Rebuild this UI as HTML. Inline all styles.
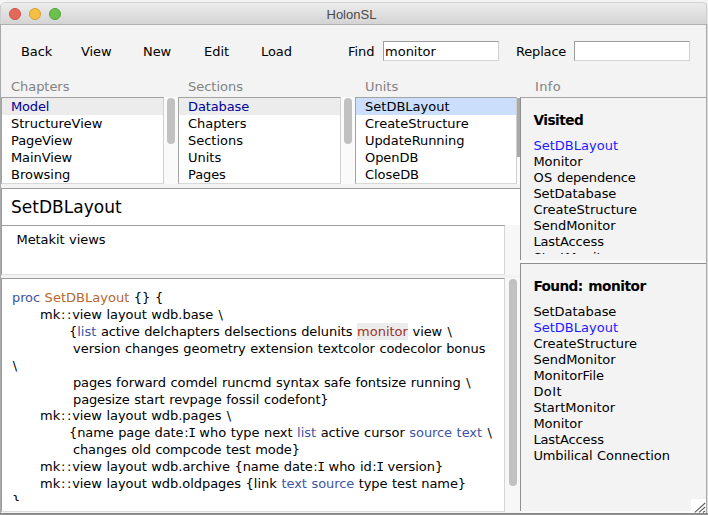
<!DOCTYPE html>
<html><head><meta charset="utf-8"><title>HolonSL</title><style>
html,body{margin:0;padding:0;}
body{width:708px;height:515px;overflow:hidden;background:#fff;position:relative;font-family:"DejaVu Sans", "Liberation Sans", sans-serif;font-size:13px;color:#000;}
div{position:absolute;box-sizing:border-box;white-space:pre;}
.t{line-height:17px;height:17px;word-spacing:0.44px;}
.lb{background:#fff;border:1px solid #a3a3a3;border-right-color:#d0d0d0;border-bottom-color:#d8d8d8;overflow:hidden;}
.lb .t{left:0;width:100%;padding-left:9px;}
.lab{color:#828282;}
.nv{color:#00009a;}
.sb{background:#c1c1c1;border-radius:4px;}
.ent{background:#fff;border:1px solid #9d9d9d;border-right-color:#cfcfcf;border-bottom-color:#d6d6d6;}
.code .t{left:0;}
.b{color:#3d55a5;}
.o{color:#b5682e;}
.m{color:#9a3322;background:#ececec;padding:1px 0;}
.il{line-height:16px;height:16px;left:12.4px;word-spacing:0.44px;}
.lk{color:#1c1cff;}
</style></head><body>
<div style="left:0;top:0;width:708px;height:30px;background:#f4f4f4;"></div>
<div style="left:0;top:2px;width:708px;height:513px;background:linear-gradient(90deg,#a9a9a9 0,#a9a9a9 1px,#ccc 1px,#ccc 705px,#a8a8a8 706px,#a8a8a8 707px,#dcdcdc 707px);border-radius:6px 6px 0 0;"></div>
<div style="left:0;top:2px;width:708px;height:22px;background:linear-gradient(90deg,#cfcfcf 0,#cfcfcf 1px,#ccc 1px,#ccc 705px,#d0d0d0 706px,#d0d0d0 707px,#e6e6e6 707px);border-radius:6px 6px 0 0;"></div>
<div style="left:0;top:513px;width:708px;height:2px;background:linear-gradient(#7e7e7e,#9a9a9a);"></div>
<div id="win" style="left:1px;top:2px;width:705px;height:511px;background:#f3f3f3;border-radius:5px 5px 0 0;overflow:hidden;">
<div style="left:0;top:0;width:705px;height:23px;background:linear-gradient(#ececec,#d4d4d4);border-top:1px solid #d2d2d2;border-bottom:1px solid #b1b1b1;"></div>
<div style="left:8px;top:6px;width:12px;height:12px;border-radius:6px;background:#e5695b;border:0.5px solid #cc5044;"></div>
<div style="left:28px;top:6px;width:12px;height:12px;border-radius:6px;background:#f3c044;border:0.5px solid #d5a02e;"></div>
<div style="left:48px;top:6px;width:12px;height:12px;border-radius:6px;background:#6bc14b;border:0.5px solid #53a338;"></div>
<div class="t" style="left:325.5px;top:3.5px;color:#4a4a4a;font-family:'Liberation Sans',sans-serif;">HolonSL</div>
<div class="t" style="left:20px;top:41px;"><span style="letter-spacing:-0.094px">Back</span></div>
<div class="t" style="left:80px;top:41px;"><span style="letter-spacing:-0.075px">View</span></div>
<div class="t" style="left:142px;top:41px;"><span style="letter-spacing:-0.083px">New</span></div>
<div class="t" style="left:203px;top:41px;"><span style="letter-spacing:-0.041px">Edit</span></div>
<div class="t" style="left:260px;top:41px;"><span style="letter-spacing:-0.095px">Load</span></div>
<div class="t" style="left:347px;top:41px;"><span style="letter-spacing:-0.054px">Find</span></div>
<div class="t" style="left:515px;top:41px;"><span style="letter-spacing:-0.176px">Replace</span></div>
<div class="ent" style="left:382px;top:39px;width:116px;height:20px;"><div class="t" style="left:1px;top:1px;"><span style="letter-spacing:0.004px">monitor</span></div></div>
<div class="ent" style="left:573px;top:39px;width:116px;height:20px;"></div>
<div class="t lab" style="left:10px;top:76px;"><span style="letter-spacing:-0.044px">Chapters</span></div>
<div class="t lab" style="left:187px;top:76px;"><span style="letter-spacing:-0.011px">Sections</span></div>
<div class="t lab" style="left:364px;top:76px;"><span style="letter-spacing:-0.006px">Units</span></div>
<div class="t lab" style="left:533.8px;top:76px;"><span style="letter-spacing:0.389px;margin-left:0.194px;margin-right:-0.194px">Info</span></div>
<div class="lb" style="left:0px;top:95px;width:163px;height:87px;">
<div class="t nv" style="top:0px;background:#ececec;"><span style="letter-spacing:-0.155px">Model</span></div>
<div class="t" style="top:17px;"><span style="letter-spacing:0.011px">StructureView</span></div>
<div class="t" style="top:34px;"><span style="letter-spacing:-0.108px">PageView</span></div>
<div class="t" style="top:51px;"><span style="letter-spacing:-0.097px">MainView</span></div>
<div class="t" style="top:68px;"><span style="letter-spacing:-0.009px">Browsing</span></div>
</div>
<div style="left:163px;top:95px;width:14px;height:87px;background:#fafafa;"></div>
<div class="sb" style="left:166px;top:96px;width:8px;height:46px;"></div>
<div class="lb" style="left:177px;top:95px;width:163px;height:87px;">
<div class="t nv" style="top:0px;background:#ececec;"><span style="letter-spacing:-0.106px">Database</span></div>
<div class="t" style="top:17px;"><span style="letter-spacing:-0.044px">Chapters</span></div>
<div class="t" style="top:34px;"><span style="letter-spacing:-0.011px">Sections</span></div>
<div class="t" style="top:51px;"><span style="letter-spacing:-0.006px">Units</span></div>
<div class="t" style="top:68px;"><span style="letter-spacing:-0.113px">Pages</span></div>
</div>
<div style="left:340px;top:95px;width:14px;height:87px;background:#fafafa;"></div>
<div class="sb" style="left:343px;top:96px;width:8px;height:46px;"></div>
<div class="lb" style="left:354px;top:95px;width:162px;height:87px;">
<div class="t " style="top:0px;background:#cbdffd;"><span style="letter-spacing:0.017px">SetDBLayout</span></div>
<div class="t" style="top:17px;"><span style="letter-spacing:0.000px">CreateStructure</span></div>
<div class="t" style="top:34px;"><span style="letter-spacing:-0.072px">UpdateRunning</span></div>
<div class="t" style="top:51px;"><span style="letter-spacing:-0.070px">OpenDB</span></div>
<div class="t" style="top:68px;"><span style="letter-spacing:-0.052px">CloseDB</span></div>
</div>
<div style="left:516px;top:95px;width:3px;height:87px;background:#fafafa;"></div>
<div style="left:516px;top:96px;width:3px;height:59px;background:#a9a9a9;"></div>
<div style="left:0px;top:186px;width:520px;height:38px;background:#fff;border-top:1px solid #9c9c9c;border-left:1px solid #9c9c9c;"><div style="left:9px;top:8px;font-size:17px;line-height:21px;"><span style="letter-spacing:0.023px">SetDBLayout</span></div></div>
<div style="left:1px;top:223px;width:519px;height:50px;background:#f7f7f7;"></div>
<div style="left:0px;top:223px;width:504px;height:50px;background:#fff;border:1px solid #9c9c9c;border-right-color:#d5d5d5;border-bottom-color:#dcdcdc;"><div class="t" style="left:14.5px;top:5px;"><span style="letter-spacing:-0.072px">Metakit</span> <span style="letter-spacing:-0.058px">views</span></div></div>
<div style="left:1px;top:276px;width:519px;height:234px;background:#f7f7f7;"></div>
<div class="code" style="left:0px;top:276px;width:504px;height:234px;background:#fff;border:1px solid #9c9c9c;border-right-color:#d5d5d5;border-bottom-color:#dcdcdc;overflow:hidden;"><div style="left:0;top:0;width:503px;height:222.4px;overflow:hidden;">
<div class="t" style="left:10px;top:10.00px;"><span class="b" style="letter-spacing:-0.097px">proc</span> <span class="o" style="letter-spacing:0.017px">SetDBLayout</span> <span style="letter-spacing:-0.019px">{}</span> <span style="letter-spacing:-0.019px">{</span></div>
<div class="t" style="left:38px;top:26.92px;"><span style="letter-spacing:0.073px">mk</span><span style="letter-spacing:1.523px;margin-left:0.762px;margin-right:-0.762px">::</span><span style="letter-spacing:-0.073px">view</span> <span style="letter-spacing:-0.042px">layout</span> <span style="letter-spacing:-0.033px">wdb.base</span> <span style="letter-spacing:1.523px;margin-left:0.762px;margin-right:-0.762px">\</span></div>
<div class="t" style="left:67px;top:43.84px;"><span style="letter-spacing:-0.019px">{</span><span class="b" style="letter-spacing:-0.016px">list</span> <span style="letter-spacing:-0.134px">active</span> <span style="letter-spacing:-0.107px">delchapters</span> <span style="letter-spacing:-0.107px">delsections</span> <span style="letter-spacing:-0.062px">delunits</span> <span class="m" style="letter-spacing:0.004px">monitor</span> <span style="letter-spacing:-0.073px">view</span> <span style="letter-spacing:1.523px;margin-left:0.762px;margin-right:-0.762px">\</span></div>
<div class="t" style="left:71px;top:60.76px;"><span style="letter-spacing:-0.024px">version</span> <span style="letter-spacing:-0.138px">changes</span> <span style="letter-spacing:-0.064px">geometry</span> <span style="letter-spacing:-0.068px">extension</span> <span style="letter-spacing:-0.061px">textcolor</span> <span style="letter-spacing:-0.132px">codecolor</span> <span style="letter-spacing:-0.048px">bonus</span></div>
<div class="t" style="left:10px;top:77.68px;"><span style="letter-spacing:1.523px;margin-left:0.762px;margin-right:-0.762px">\</span></div>
<div class="t" style="left:71px;top:94.60px;"><span style="letter-spacing:-0.143px">pages</span> <span style="letter-spacing:0.005px">forward</span> <span style="letter-spacing:-0.151px">comdel</span> <span style="letter-spacing:-0.061px">runcmd</span> <span style="letter-spacing:-0.024px">syntax</span> <span style="letter-spacing:-0.105px">safe</span> <span style="letter-spacing:-0.044px">fontsize</span> <span style="letter-spacing:-0.006px">running</span> <span style="letter-spacing:1.523px;margin-left:0.762px;margin-right:-0.762px">\</span></div>
<div class="t" style="left:71px;top:111.52px;"><span style="letter-spacing:-0.126px">pagesize</span> <span style="letter-spacing:0.019px">start</span> <span style="letter-spacing:-0.110px">revpage</span> <span style="letter-spacing:-0.026px">fossil</span> <span style="letter-spacing:-0.102px">codefont}</span></div>
<div class="t" style="left:38px;top:128.44px;"><span style="letter-spacing:0.073px">mk</span><span style="letter-spacing:1.523px;margin-left:0.762px;margin-right:-0.762px">::</span><span style="letter-spacing:-0.073px">view</span> <span style="letter-spacing:-0.042px">layout</span> <span style="letter-spacing:-0.047px">wdb.pages</span> <span style="letter-spacing:1.523px;margin-left:0.762px;margin-right:-0.762px">\</span></div>
<div class="t" style="left:67px;top:145.36px;"><span style="letter-spacing:-0.093px">{name</span> <span style="letter-spacing:-0.179px">page</span> <span style="letter-spacing:-0.135px">date</span><span style="letter-spacing:1.523px;margin-left:0.762px;margin-right:-0.762px">:</span><span style="letter-spacing:-2.354px;font-family:'DejaVu Sans Mono',monospace;margin-left:-1.177px;margin-right:1.177px">I</span> <span style="letter-spacing:-0.023px">who</span> <span style="letter-spacing:-0.095px">type</span> <span style="letter-spacing:-0.060px">next</span> <span class="b" style="letter-spacing:-0.016px">list</span> <span style="letter-spacing:-0.134px">active</span> <span style="letter-spacing:-0.007px">cursor</span> <span class="b" style="letter-spacing:-0.084px">source</span> <span class="b" style="letter-spacing:-0.051px">text</span> <span style="letter-spacing:1.523px;margin-left:0.762px;margin-right:-0.762px">\</span></div>
<div class="t" style="left:71px;top:162.28px;"><span style="letter-spacing:-0.138px">changes</span> <span style="letter-spacing:-0.087px">old</span> <span style="letter-spacing:-0.182px">compcode</span> <span style="letter-spacing:-0.051px">test</span> <span style="letter-spacing:-0.102px">mode}</span></div>
<div class="t" style="left:38px;top:179.20px;"><span style="letter-spacing:0.073px">mk</span><span style="letter-spacing:1.523px;margin-left:0.762px;margin-right:-0.762px">::</span><span style="letter-spacing:-0.073px">view</span> <span style="letter-spacing:-0.042px">layout</span> <span style="letter-spacing:-0.031px">wdb.archive</span> <span style="letter-spacing:-0.093px">{name</span> <span style="letter-spacing:-0.135px">date</span><span style="letter-spacing:1.523px;margin-left:0.762px;margin-right:-0.762px">:</span><span style="letter-spacing:-2.354px;font-family:'DejaVu Sans Mono',monospace;margin-left:-1.177px;margin-right:1.177px">I</span> <span style="letter-spacing:-0.023px">who</span> <span style="letter-spacing:-0.098px">id</span><span style="letter-spacing:1.523px;margin-left:0.762px;margin-right:-0.762px">:</span><span style="letter-spacing:-2.354px;font-family:'DejaVu Sans Mono',monospace;margin-left:-1.177px;margin-right:1.177px">I</span> <span style="letter-spacing:-0.024px">version}</span></div>
<div class="t" style="left:38px;top:196.12px;"><span style="letter-spacing:0.073px">mk</span><span style="letter-spacing:1.523px;margin-left:0.762px;margin-right:-0.762px">::</span><span style="letter-spacing:-0.073px">view</span> <span style="letter-spacing:-0.042px">layout</span> <span style="letter-spacing:-0.057px">wdb.oldpages</span> <span style="letter-spacing:0.009px">{link</span> <span class="b" style="letter-spacing:-0.051px">text</span> <span class="b" style="letter-spacing:-0.084px">source</span> <span style="letter-spacing:-0.095px">type</span> <span style="letter-spacing:-0.051px">test</span> <span style="letter-spacing:-0.093px">name}</span></div>
<div class="t" style="left:10px;top:213.04px;"><span style="letter-spacing:-0.019px">}</span></div>
</div></div>
<div class="sb" style="left:508px;top:277px;width:8px;height:207px;"></div>
<div style="left:519px;top:95px;width:186px;height:164px;background:#f3f3f3;border-left:1px solid #8e8e8e;border-top:1px solid #a5a5a5;overflow:hidden;">
<div class="il" style="top:14.4px;font-weight:bold;font-size:13.7px;"><span style="letter-spacing:-0.518px">Visited</span></div>
<div class="il lk" style="top:39.60px;"><span style="letter-spacing:0.017px">SetDBLayout</span></div>
<div class="il" style="top:55.63px;"><span style="letter-spacing:-0.031px">Monitor</span></div>
<div class="il" style="top:71.66px;"><span style="letter-spacing:0.317px">OS</span> <span style="letter-spacing:-0.187px">dependence</span></div>
<div class="il" style="top:87.69px;"><span style="letter-spacing:-0.040px">SetDatabase</span></div>
<div class="il" style="top:103.72px;"><span style="letter-spacing:0.000px">CreateStructure</span></div>
<div class="il" style="top:119.75px;"><span style="letter-spacing:0.000px">SendMonitor</span></div>
<div class="il" style="top:135.78px;"><span style="letter-spacing:-0.115px">LastAccess</span></div>
<div class="il" style="top:151.81px;"><span style="letter-spacing:0.043px">StartMonitor</span></div>
<div style="left:0;top:156.3px;width:186px;height:8px;background:#f3f3f3;"></div>
</div>
<div style="left:519px;top:258px;width:186px;height:3px;background:#fafafa;"></div>
<div style="left:519px;top:261px;width:186px;height:250px;background:#f3f3f3;border-left:1px solid #8e8e8e;border-top:1px solid #8e8e8e;overflow:hidden;">
<div class="il" style="top:14.2px;font-weight:bold;font-size:13.7px;"><span style="letter-spacing:-0.621px">Found</span><span style="letter-spacing:-0.248px;margin-left:-0.124px;margin-right:0.124px">:</span> <span style="letter-spacing:-0.451px">monitor</span></div>
<div class="il" style="top:39.60px;"><span style="letter-spacing:-0.040px">SetDatabase</span></div>
<div class="il lk" style="top:55.63px;"><span style="letter-spacing:0.017px">SetDBLayout</span></div>
<div class="il" style="top:71.66px;"><span style="letter-spacing:0.000px">CreateStructure</span></div>
<div class="il" style="top:87.69px;"><span style="letter-spacing:0.000px">SendMonitor</span></div>
<div class="il" style="top:103.72px;"><span style="letter-spacing:-0.051px">MonitorFile</span></div>
<div class="il" style="top:119.75px;"><span style="letter-spacing:0.401px">DoIt</span></div>
<div class="il" style="top:135.78px;"><span style="letter-spacing:0.043px">StartMonitor</span></div>
<div class="il" style="top:151.81px;"><span style="letter-spacing:-0.031px">Monitor</span></div>
<div class="il" style="top:167.84px;"><span style="letter-spacing:-0.115px">LastAccess</span></div>
<div class="il" style="top:183.87px;"><span style="letter-spacing:-0.098px">Umbilical</span> <span style="letter-spacing:-0.081px">Connection</span></div>
</div>
<div style="left:519px;top:509px;width:186px;height:2px;background:#fbfbfb;"></div>
<div style="left:690px;top:497px;width:15px;height:14px;background:#fff;"><svg width="15" height="14" viewBox="0 0 15 14" style="position:absolute;left:0;top:0"><path d="M3.8 13.4L14.2 4M7.9 13.4L14.2 8M11.8 13.5L14.2 11.9" stroke="#5a5a5a" stroke-width="1.1" fill="none"/></svg></div>
</div>
</body></html>
